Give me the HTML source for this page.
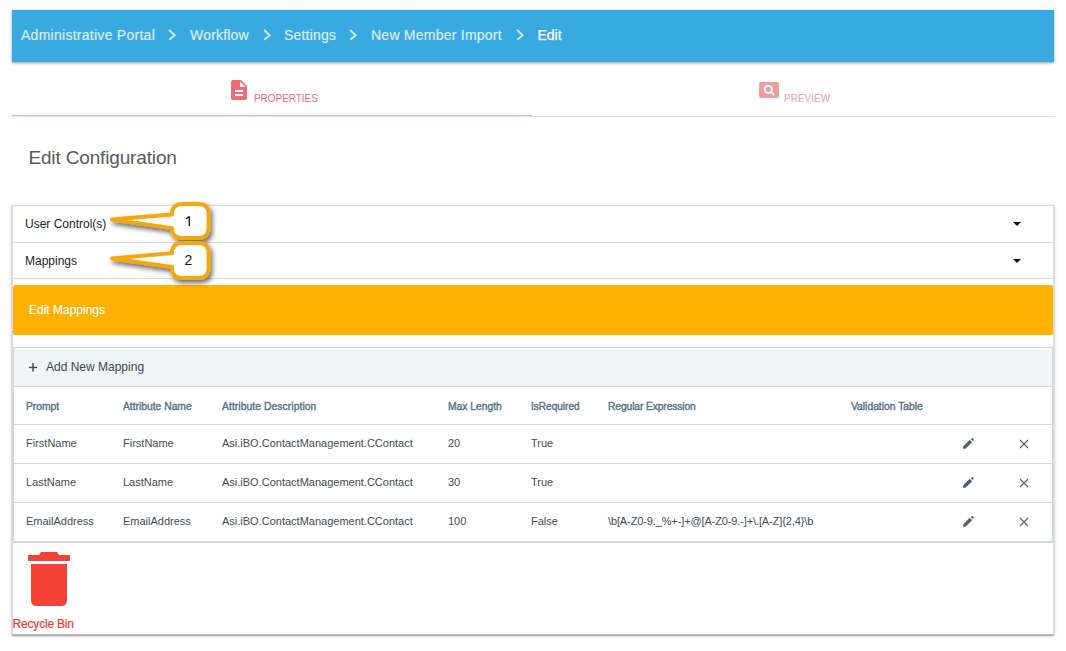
<!DOCTYPE html>
<html><head><meta charset="utf-8">
<style>
html,body{margin:0;padding:0;background:#fff;width:1066px;height:651px;overflow:hidden;position:relative;font-family:"Liberation Sans",sans-serif;}
.a{position:absolute;white-space:nowrap;}
#hdr{left:12px;top:10px;width:1042px;height:52px;background:#39a9e1;box-shadow:0 1px 2px rgba(0,0,0,.3),0 1px 5px rgba(0,0,0,.12);}
.bc{font-size:14px;line-height:14px;color:#dceffa;top:28px;-webkit-text-stroke:0.2px #dceffa;}
.chev{top:29px;}
.tabtxt{font-size:10px;line-height:10px;top:94px;}
.cont{left:12px;top:205px;width:1040px;height:428px;border:1px solid #d9d9d9;border-bottom-color:#b8b8b8;box-shadow:0 1px 1px rgba(0,0,0,.2),0 1px 3px rgba(0,0,0,.18),0 0 4px rgba(0,0,0,.08);background:#fff;}
.hline{height:1px;background:#dcdcdc;}
.acc{font-size:12px;line-height:12px;color:#222;}
.th{font-size:10.3px;line-height:11px;color:#587380;top:401px;-webkit-text-stroke:0.4px #587380;}
.td{font-size:11px;line-height:11px;color:#3f4b52;}
.tl{height:1px;background:#cfd9de;left:13px;width:1040px;}
</style></head><body>
<div id="hdr" class="a"></div>
<div class="a bc" style="left:21px;letter-spacing:0.27px">Administrative Portal</div>
<svg class="a chev" style="left:168px" width="9" height="12" viewBox="0 0 9 12"><polyline points="1.2,1 6.7,6.3 1.2,10.7" fill="none" stroke="#d6ecf8" stroke-width="1.8"/></svg>
<div class="a bc" style="left:190px;letter-spacing:0.2px">Workflow</div>
<svg class="a chev" style="left:263px" width="9" height="12" viewBox="0 0 9 12"><polyline points="1.2,1 6.7,6.3 1.2,10.7" fill="none" stroke="#d6ecf8" stroke-width="1.8"/></svg>
<div class="a bc" style="left:284px;letter-spacing:0.2px">Settings</div>
<svg class="a chev" style="left:349px" width="9" height="12" viewBox="0 0 9 12"><polyline points="1.2,1 6.7,6.3 1.2,10.7" fill="none" stroke="#d6ecf8" stroke-width="1.8"/></svg>
<div class="a bc" style="left:371px;letter-spacing:0.24px">New Member Import</div>
<svg class="a chev" style="left:516px" width="9" height="12" viewBox="0 0 9 12"><polyline points="1.2,1 6.7,6.3 1.2,10.7" fill="none" stroke="#d6ecf8" stroke-width="1.8"/></svg>
<div class="a bc" style="left:537.5px;color:#fff;-webkit-text-stroke:0.25px #fff">Edit</div>

<!-- tabs -->
<svg class="a" style="left:231px;top:80px" width="16" height="20" viewBox="4 2 16 20"><path d="M14 2H6c-1.1 0-1.99.9-1.99 2L4 20c0 1.1.89 2 1.99 2H18c1.1 0 2-.9 2-2V8l-6-6zm2 16H8v-2h8v2zm0-4H8v-2h8v2zm-3-5V3.5L18.5 9H13z" fill="#ee6c74"/></svg>
<div class="a tabtxt" style="left:254px;color:#ec6a72;letter-spacing:-0.05px">PROPERTIES</div>
<div class="a" style="left:12px;top:115px;width:520px;height:1px;background:#f3aeb2"></div>
<div class="a" style="left:12px;top:116px;width:520px;height:1px;background:#dfe4e5"></div>
<div class="a" style="left:532px;top:116px;width:522px;height:1px;background:#dcdcdc"></div>
<svg class="a" style="left:759px;top:82px" width="20" height="16" viewBox="0 0 20 16"><rect x="0" y="0" width="20" height="16" rx="2" fill="#f19ca1"/><circle cx="9.3" cy="7.3" r="3.6" fill="none" stroke="#fff" stroke-width="2"/><line x1="11.8" y1="9.8" x2="15.2" y2="13.2" stroke="#fff" stroke-width="2"/></svg>
<div class="a tabtxt" style="left:784px;color:#f0a0a5">PREVIEW</div>

<div class="a" style="left:28.4px;top:148px;font-size:19px;line-height:19px;color:#595959;letter-spacing:-0.15px">Edit Configuration</div>

<!-- container -->
<div class="a cont"></div>
<div class="a hline" style="left:13px;top:242px;width:1040px"></div>
<div class="a hline" style="left:13px;top:278px;width:1040px"></div>
<div class="a acc" style="left:25px;top:218px">User Control(s)</div>
<div class="a acc" style="left:25px;top:255px">Mappings</div>
<svg class="a" style="left:1013px;top:222px" width="8" height="4"><polygon points="0,0 8,0 4,4" fill="#111"/></svg>
<svg class="a" style="left:1013px;top:259px" width="8" height="4"><polygon points="0,0 8,0 4,4" fill="#111"/></svg>

<div class="a" style="left:13px;top:285px;width:1040px;height:50px;background:#ffb200;border-radius:2px"></div>
<div class="a acc" style="left:29px;top:304px;color:#fff;-webkit-text-stroke:0.15px #fff">Edit Mappings</div>

<div class="a" style="left:13px;top:347px;width:1038px;height:39px;background:#f2f5f6;border:1px solid #cfd9de;border-bottom:none"></div>
<svg class="a" style="left:29px;top:363px" width="8" height="9"><rect x="0" y="3.8" width="8" height="1.4" fill="#37474f"/><rect x="3.3" y="0" width="1.4" height="8.5" fill="#37474f"/></svg>
<div class="a acc" style="left:46px;top:361px;color:#37474f">Add New Mapping</div>

<!-- table -->
<div class="a" style="left:13px;top:386px;width:1px;height:156px;background:#cfd9de"></div>
<div class="a" style="left:1052px;top:386px;width:1px;height:156px;background:#cfd9de"></div>
<div class="a tl" style="top:386px"></div>
<div class="a tl" style="top:424px"></div>
<div class="a tl" style="top:463px"></div>
<div class="a tl" style="top:502px"></div>
<div class="a tl" style="top:541px;height:2px"></div>

<div class="a th" style="left:26px">Prompt</div>
<div class="a th" style="left:123px">Attribute Name</div>
<div class="a th" style="left:222px;letter-spacing:0.08px">Attribute Description</div>
<div class="a th" style="left:448px">Max Length</div>
<div class="a th" style="left:531px;font-size:10px;letter-spacing:0.02px">IsRequired</div>
<div class="a th" style="left:608px;letter-spacing:-0.12px">Regular Expression</div>
<div class="a th" style="left:851px">Validation Table</div>

<div class="a td" style="left:26px;top:438px">FirstName</div>
<div class="a td" style="left:123px;top:438px">FirstName</div>
<div class="a td" style="left:222px;top:438px">Asi.iBO.ContactManagement.CContact</div>
<div class="a td" style="left:448px;top:438px">20</div>
<div class="a td" style="left:531px;top:438px">True</div>

<div class="a td" style="left:26px;top:477px">LastName</div>
<div class="a td" style="left:123px;top:477px">LastName</div>
<div class="a td" style="left:222px;top:477px">Asi.iBO.ContactManagement.CContact</div>
<div class="a td" style="left:448px;top:477px">30</div>
<div class="a td" style="left:531px;top:477px">True</div>

<div class="a td" style="left:26px;top:516px">EmailAddress</div>
<div class="a td" style="left:123px;top:516px">EmailAddress</div>
<div class="a td" style="left:222px;top:516px">Asi.iBO.ContactManagement.CContact</div>
<div class="a td" style="left:448px;top:516px">100</div>
<div class="a td" style="left:531px;top:516px">False</div>
<div class="a td" style="left:608px;top:516px;letter-spacing:-0.12px">\b[A-Z0-9._%+-]+@[A-Z0-9.-]+\.[A-Z]{2,4}\b</div>

<!-- row icons -->
<svg class="a" style="left:960px;top:435px" width="18" height="17" viewBox="0 0 18 17"><path d="M3.1,13.8 V11.4 L9.7,4.8 L12.1,7.2 L5.5,13.8 Z" fill="#4a6270"/><path d="M10.8,4.3 L11.9,3.2 Q12.3,2.9 12.7,3.2 L13.6,4.1 Q13.9,4.5 13.6,4.9 L12.6,5.9 Z" fill="#4a6270"/></svg>
<svg class="a" style="left:1019px;top:439px" width="10" height="10" viewBox="0 0 10 10"><path d="M1,1 L9,9 M9,1 L1,9" stroke="#4a6270" stroke-width="1.1"/></svg>
<svg class="a" style="left:960px;top:474px" width="18" height="17" viewBox="0 0 18 17"><path d="M3.1,13.8 V11.4 L9.7,4.8 L12.1,7.2 L5.5,13.8 Z" fill="#4a6270"/><path d="M10.8,4.3 L11.9,3.2 Q12.3,2.9 12.7,3.2 L13.6,4.1 Q13.9,4.5 13.6,4.9 L12.6,5.9 Z" fill="#4a6270"/></svg>
<svg class="a" style="left:1019px;top:478px" width="10" height="10" viewBox="0 0 10 10"><path d="M1,1 L9,9 M9,1 L1,9" stroke="#4a6270" stroke-width="1.1"/></svg>
<svg class="a" style="left:960px;top:513px" width="18" height="17" viewBox="0 0 18 17"><path d="M3.1,13.8 V11.4 L9.7,4.8 L12.1,7.2 L5.5,13.8 Z" fill="#4a6270"/><path d="M10.8,4.3 L11.9,3.2 Q12.3,2.9 12.7,3.2 L13.6,4.1 Q13.9,4.5 13.6,4.9 L12.6,5.9 Z" fill="#4a6270"/></svg>
<svg class="a" style="left:1019px;top:517px" width="10" height="10" viewBox="0 0 10 10"><path d="M1,1 L9,9 M9,1 L1,9" stroke="#4a6270" stroke-width="1.1"/></svg>

<!-- recycle bin -->
<svg class="a" style="left:28px;top:552px" width="42" height="55" viewBox="0 0 42 55"><path d="M0,3 H11 L13,0 H29 L31,3 H42 V9 H0 Z" fill="#f44336"/><path d="M3,12 H39 V48 Q39,54 33,54 H9 Q3,54 3,48 Z" fill="#f44336"/></svg>
<div class="a" style="left:12.6px;top:618px;font-size:12px;line-height:12px;color:#f4372c;letter-spacing:-0.2px;-webkit-text-stroke:0.2px #f4372c">Recycle Bin</div>

<!-- callouts -->
<svg class="a" style="left:100px;top:195px" width="130" height="95" viewBox="100 195 130 95">
<defs><filter id="sh" x="-20%" y="-20%" width="150%" height="160%"><feGaussianBlur in="SourceAlpha" stdDeviation="2.4"/><feOffset dx="2" dy="3.2"/><feComponentTransfer><feFuncA type="linear" slope="0.6"/></feComponentTransfer><feMerge><feMergeNode/><feMergeNode in="SourceGraphic"/></feMerge></filter></defs>
<g filter="url(#sh)">
<path d="M182,204 H198.5 Q208.5,204 208.5,214 V228 Q208.5,238 198.5,238 H182 Q172,238 172,228 V228.2 L112,219.5 L172,214.5 V214 Q172,204 182,204 Z" fill="#fff" stroke="#f5a70c" stroke-width="3.8" stroke-linejoin="round"/>
</g>
<g filter="url(#sh)">
<path d="M182,243 H198.5 Q208.5,243 208.5,253 V268 Q208.5,278 198.5,278 H182 Q172,278 172,268 V267 L112,258.5 L172,253.2 V253 Q172,243 182,243 Z" fill="#fff" stroke="#f5a70c" stroke-width="3.8" stroke-linejoin="round"/>
</g>
<path d="M189.3,216.2 V226 M189.3,216.4 L186.2,218.8" stroke="#111" stroke-width="1.3" fill="none"/>
<text x="184.6" y="265" font-family="Liberation Sans" font-size="14" fill="#111">2</text>
</svg>
</body></html>
